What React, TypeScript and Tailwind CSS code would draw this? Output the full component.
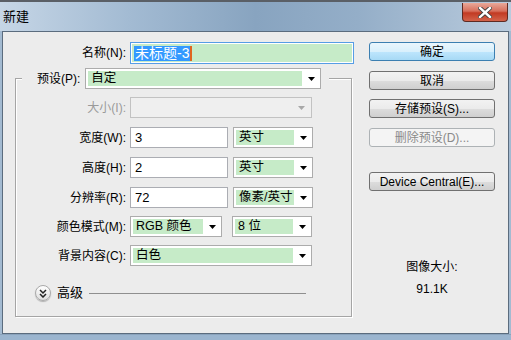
import React from "react";

const FONT = { fontFamily: '"Liberation Sans", "Noto Sans CJK SC", sans-serif' };

function Arrow({ disabled }: { disabled?: boolean }) {
  return (
    <svg width="7" height="4" viewBox="0 0 7 4">
      <path d="M0 0 H7 L3.5 4 Z" fill={disabled ? "#a8a8a8" : "#000"} />
    </svg>
  );
}

function Select({
  w,
  text,
  arrowW = 18,
}: {
  w: string;
  text: string;
  arrowW?: number;
}) {
  return (
    <div className={`${w} flex h-[21px] border border-[#acacac] bg-white p-[2px] pr-0`}>
      <div className="flex flex-1 items-center overflow-hidden whitespace-nowrap bg-[#c6ebc8] pl-[3px] text-[12.5px] leading-none">
        {text}
      </div>
      <div className="flex items-center justify-center" style={{ width: arrowW }}>
        <Arrow />
      </div>
    </div>
  );
}

function Row({
  label,
  mt,
  disabled,
  children,
}: {
  label: string;
  mt: string;
  disabled?: boolean;
  children: React.ReactNode;
}) {
  return (
    <div className={`${mt} flex items-center`}>
      <div className={`w-[110px] text-right ${disabled ? "text-[#9a9a9a]" : "text-black"}`}>
        {label}
      </div>
      <div className="ml-[4px] flex gap-[5px]">{children}</div>
    </div>
  );
}

function Button({
  label,
  mt,
  kind = "normal",
}: {
  label: string;
  mt: string;
  kind?: "normal" | "default" | "disabled";
}) {
  const styles = {
    normal:
      "border-[#707070] bg-[linear-gradient(#f2f2f2_0%,#ebebeb_50%,#dddddd_51%,#cfcfcf_100%)] text-black",
    default:
      "border-[#3c7fb1] bg-[linear-gradient(#eaf6fd_0%,#d9f0fc_50%,#bee6fd_51%,#a7d9f5_100%)] text-black",
    disabled: "border-[#adb2b5] bg-[#f4f4f4] text-[#8a8a8a]",
  }[kind];
  return (
    <div
      className={`${mt} flex h-[19px] w-[126px] items-center justify-center rounded-[3px] border leading-none ${styles}`}
    >
      {label}
    </div>
  );
}

export default function App() {
  return (
    <div
      className="flex h-[340px] w-[511px] flex-col overflow-hidden bg-[#a3bad1] text-[12px] text-black"
      style={FONT}
    >
      {/* title bar */}
      <div className="relative flex h-[31px] items-start border-t-2 border-[#5a5f66] bg-[linear-gradient(90deg,#c6d6e6_0%,#a3bbd3_25%,#88a4c0_50%,#94aec8_70%,#b9cbdd_100%)]">
        <span className="ml-[3px] mt-[8px] text-[13px] leading-none">新建</span>
        <div className="absolute right-[3px] top-[1px] flex h-[19px] w-[46px] items-center justify-center rounded-b-[4px] border border-t-0 border-[#5e2a22] bg-[linear-gradient(#e9a899_0%,#d66f5c_45%,#c23a23_55%,#d2634b_100%)]">
          <svg width="14" height="11" viewBox="0 0 14 11">
            <path
              d="M2 1 L12 10 M12 1 L2 10"
              stroke="#3b3b3b"
              strokeWidth="4.2"
              strokeLinecap="square"
            />
            <path
              d="M2 1 L12 10 M12 1 L2 10"
              stroke="#fff"
              strokeWidth="2.4"
              strokeLinecap="square"
            />
          </svg>
        </div>
      </div>

      {/* client area */}
      <div className="mx-[2px] flex h-[303px] border border-[#5b6c7e] bg-[#ececec]">
        {/* left column */}
        <div className="w-[352px]">
          <div className="mt-[10px] flex items-center">
            <div className="w-[123px] text-right">名称(N):</div>
            <div className="ml-[4px] flex h-[22px] w-[224px] items-center border border-[#569de5] bg-white p-[1px]">
              <div className="flex h-full flex-1 items-center bg-[#c6ebc8] pl-[2px]">
                <span className="bg-[#3399ff] px-[1px] text-[14px] leading-[15px] text-white">
                  未标题-3
                </span>
                <span className="h-[15px] w-[2px] bg-[#e0651f]" />
              </div>
            </div>
          </div>

          <fieldset className="ml-[12px] mt-[4px] w-[337px] border border-[#a5a5a5] p-0 pb-[15px] shadow-[inset_1px_1px_0_#fff,1px_1px_0_#fff]">
            <legend className="ml-[6px] flex items-center bg-[#ececec] pl-[15px] pr-[8px]">
              <span>预设(P):</span>
              <span className="ml-[5px]">
                <Select w="w-[236px]" text="自定" />
              </span>
            </legend>

            <Row label="大小(I):" mt="mt-[8px]" disabled>
              <div className="flex h-[21px] w-[182px] items-center justify-end border border-[#c2c2c2] bg-[#efefef] pr-[6px]">
                <Arrow disabled />
              </div>
            </Row>
            <Row label="宽度(W):" mt="mt-[9px]">
              <div className="flex h-[21px] w-[98px] items-center border border-[#abadb3] bg-white pl-[4px] text-[13px]">
                3
              </div>
              <Select w="w-[80px]" text="英寸" />
            </Row>
            <Row label="高度(H):" mt="mt-[9px]">
              <div className="flex h-[21px] w-[98px] items-center border border-[#abadb3] bg-white pl-[4px] text-[13px]">
                2
              </div>
              <Select w="w-[80px]" text="英寸" />
            </Row>
            <Row label="分辨率(R):" mt="mt-[9px]">
              <div className="flex h-[21px] w-[98px] items-center border border-[#abadb3] bg-white pl-[4px] text-[13px]">
                72
              </div>
              <Select w="w-[80px]" text="像素/英寸" />
            </Row>
            <Row label="颜色模式(M):" mt="mt-[8px]">
              <Select w="w-[92px]" text="RGB 颜色" />
              <div className="ml-[5px]">
                <Select w="w-[80px]" text="8 位" />
              </div>
            </Row>
            <Row label="背景内容(C):" mt="mt-[8px]">
              <Select w="w-[182px]" text="白色" />
            </Row>

            <div className="mt-[19px] flex h-[16px] items-center">
              <div className="ml-[19px] flex h-[16px] w-[16px] items-center justify-center rounded-full border border-[#a9a9a9] bg-[linear-gradient(#ffffff,#dedede)] shadow-[0_1px_1px_rgba(0,0,0,0.25)]">
                <svg width="8" height="9" viewBox="0 0 8 9">
                  <path d="M1 1 L4 4 L7 1 M1 5 L4 8 L7 5" stroke="#222" strokeWidth="1.5" fill="none" />
                </svg>
              </div>
              <span className="ml-[6px] text-[13px]">高级</span>
              <div className="ml-[6px] h-[1px] w-[217px] bg-[#8f8f8f]" />
            </div>
          </fieldset>
        </div>

        {/* right column */}
        <div className="ml-[14px] flex w-[126px] flex-col items-center">
          <Button label="确定" mt="mt-[10px]" kind="default" />
          <Button label="取消" mt="mt-[10px]" />
          <Button label="存储预设(S)..." mt="mt-[9px]" />
          <Button label="删除预设(D)..." mt="mt-[10px]" kind="disabled" />
          <Button label="Device Central(E)..." mt="mt-[25px]" />
          <div className="mt-[68px] leading-[16px]">图像大小:</div>
          <div className="mt-[6px] leading-[16px]">91.1K</div>
        </div>
      </div>
      <div className="flex-1 border-t border-[#8aa3bc] bg-[#9bb5cf]" />
    </div>
  );
}
